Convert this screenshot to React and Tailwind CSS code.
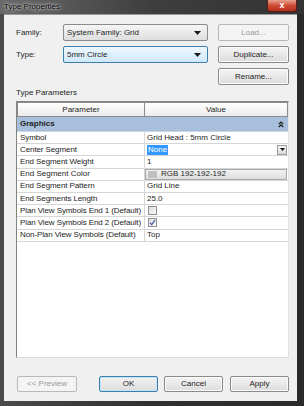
import React from "react";

const Arrow = () => (
  <svg width="7" height="4" viewBox="0 0 7 4" className="shrink-0">
    <path d="M0 0 H7 L3.5 4 Z" fill="#1a1a1a" />
  </svg>
);

function Combo({ text, focused }) {
  return (
    <div
      className={
        "w-[145px] h-[17px] rounded-[2px] border flex items-center pl-[3px] pr-[6px] " +
        (focused
          ? "border-[#3c7fb1] bg-gradient-to-b from-[#eef7fd] to-[#cfe9f8]"
          : "border-[#8a8a8a] bg-gradient-to-b from-[#f6f6f6] to-[#dedede]")
      }
    >
      <span className="flex-1">{text}</span>
      <Arrow />
    </div>
  );
}

function Btn({ children, w, disabled, focused }) {
  return (
    <div
      className={
        "h-full rounded-[2px] border flex items-center justify-center " +
        w +
        " " +
        (disabled
          ? "border-[#b5b9bc] bg-[#f4f4f4] text-[#9a9a9a]"
          : focused
          ? "border-[#3c7fb1] bg-gradient-to-b from-[#f2f2f2] to-[#dcdcdc] shadow-[inset_0_0_0_1px_#c4e5f6]"
          : "border-[#8a8a8a] bg-gradient-to-b from-[#f4f4f4] to-[#dcdcdc] shadow-[inset_0_0_0_1px_#fbfbfb]")
      }
    >
      {children}
    </div>
  );
}

function Row({ name, children }) {
  return (
    <div className="h-[12.2px] flex border-b border-[#d6d6d6] bg-white">
      <div className="w-[128px] shrink-0 border-r border-[#d6d6d6] pl-[3px] flex items-center leading-none whitespace-nowrap overflow-hidden tracking-[-0.1px]">
        {name}
      </div>
      <div className="flex-1 flex items-center pl-[2px] leading-none whitespace-nowrap">{children}</div>
    </div>
  );
}

function Check({ checked }) {
  return (
    <div className="ml-[1px] w-[9px] h-[9px] border border-[#8f8f8f] bg-gradient-to-br from-[#dcdcdc] to-[#fbfbfb] flex items-center justify-center">
      {checked && (
        <svg width="7" height="7" viewBox="0 0 7 7">
          <path d="M1 3.8 L2.8 5.6 L6 1" stroke="#3653a5" strokeWidth="1.2" fill="none" />
        </svg>
      )}
    </div>
  );
}

export default function App() {
  return (
    <div className="w-[304px] h-[406px] flex flex-col bg-gradient-to-r from-[#4a4a4a] via-[#303030] to-[#2a2a2a] font-['Liberation_Sans',Arial,sans-serif] text-[8px] text-[#1e1e1e] overflow-hidden">
      {/* Title bar */}
      <div className="h-[14px] shrink-0 flex items-start bg-gradient-to-r from-[#6a6a6a] via-[#3e3e3e] to-[#333333]">
        <div className="pl-[4px] pt-[2px] leading-[10px] text-[8px] text-black [text-shadow:0_0_4px_#d8d8d8,0_0_2px_#e8e8e8]">
          Type Properties
        </div>
        <div className="flex-1" />
        <div className="mr-[7px] w-[30px] h-[12px] rounded-b-[3px] border border-t-0 border-[#5a1e14] bg-gradient-to-b from-[#e8a08f] via-[#cc4a34] to-[#b5301c] flex items-center justify-center text-white font-bold text-[9px] leading-none">
          x
        </div>
      </div>

      {/* Client area */}
      <div className="flex-1 ml-[4px] mr-[7px] mb-[5px] bg-[#f0f0f0] border-t border-[#9a9a9a] flex flex-col pl-[12px] pr-[8px] pt-[9px] pb-[9px]">
        <div className="h-[17px] flex items-center">
          <div className="w-[47px]">Family:</div>
          <Combo text="System Family: Grid" />
          <div className="ml-[10px] h-full">
            <Btn w="w-[71px]" disabled>
              Load...
            </Btn>
          </div>
        </div>
        <div className="h-[17px] mt-[5px] flex items-center">
          <div className="w-[47px]">Type:</div>
          <Combo text="5mm Circle" focused />
          <div className="ml-[10px] h-full">
            <Btn w="w-[71px]">Duplicate...</Btn>
          </div>
        </div>
        <div className="h-[17px] mt-[5px] flex justify-end">
          <Btn w="w-[71px]">Rename...</Btn>
        </div>
        <div className="mt-[3px] leading-[10px]">Type Parameters</div>

        {/* Table */}
        <div className="mt-[3px] flex-1 flex flex-col bg-white border border-t-[#828282] border-l-[#828282] border-r-[#e0e0e0] border-b-[#dadada]">
          <div className="h-[15px] shrink-0 flex">
            <div className="w-[128px] shrink-0 border border-[#8c8c8c] bg-gradient-to-b from-white to-[#ebebeb] flex items-center justify-center leading-none">
              Parameter
            </div>
            <div className="flex-1 border border-l-0 border-[#8c8c8c] bg-gradient-to-b from-white to-[#ebebeb] flex items-center justify-center leading-none">
              Value
            </div>
          </div>
          <div className="h-[15px] shrink-0 flex items-center bg-[#a7bfdb] pl-[3px] pr-[4px] font-bold leading-none border-b border-[#c9d6e6]">
            <span className="flex-1">Graphics</span>
            <svg width="6" height="7" viewBox="0 0 6 7">
              <path d="M0.8 3.2 L3 1 L5.2 3.2 M0.8 6 L3 3.8 L5.2 6" stroke="#1a1a1a" strokeWidth="1.2" fill="none" />
            </svg>
          </div>
          <Row name="Symbol">Grid Head : 5mm Circle</Row>
          <Row name="Center Segment">
            <span className="bg-[#3399ff] text-white px-[1px] h-[10px] flex items-center">None</span>
            <span className="flex-1" />
            <span className="mr-[1px] w-[10px] h-[10px] border border-[#9a9a9a] bg-gradient-to-b from-[#f6f6f6] to-[#d8d8d8] flex items-center justify-center">
              <svg width="5" height="3" viewBox="0 0 5 3">
                <path d="M0 0 H5 L2.5 3 Z" fill="#1a1a1a" />
              </svg>
            </span>
          </Row>
          <Row name="End Segment Weight">1</Row>
          <div className="h-[12.2px] flex border-b border-[#d6d6d6] bg-white">
            <div className="w-[128px] shrink-0 border-r border-[#d6d6d6] pl-[3px] flex items-center leading-none">
              End Segment Color
            </div>
            <div className="flex-1 flex items-center leading-none border border-[#a8a8a8] bg-gradient-to-b from-[#f3f3f3] to-[#dddddd] mr-[1px] pl-[2px]">
              <span className="w-[9px] h-[7px] bg-[#c0c0c0] mr-[4px]" />
              RGB 192-192-192
            </div>
          </div>
          <Row name="End Segment Pattern">Grid Line</Row>
          <Row name="End Segments Length">25.0</Row>
          <Row name="Plan View Symbols End 1 (Default)">
            <Check />
          </Row>
          <Row name="Plan View Symbols End 2 (Default)">
            <Check checked />
          </Row>
          <Row name="Non-Plan View Symbols (Default)">Top</Row>
          <div className="flex-1" />
        </div>

        {/* Bottom buttons */}
        <div className="mt-[18px] h-[16px] flex">
          <Btn w="w-[60px] ml-[1px]" disabled>
            &lt;&lt; Preview
          </Btn>
          <div className="flex-1" />
          <Btn w="w-[59px]" focused>
            OK
          </Btn>
          <div className="w-[6px]" />
          <Btn w="w-[59px]">Cancel</Btn>
          <div className="w-[7px]" />
          <Btn w="w-[59px]">Apply</Btn>
        </div>
      </div>
    </div>
  );
}
